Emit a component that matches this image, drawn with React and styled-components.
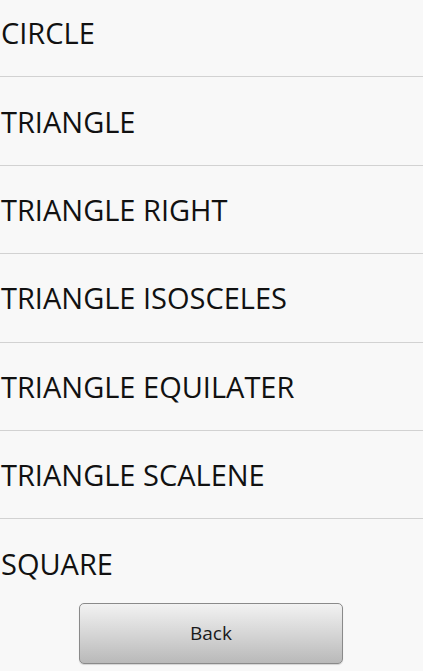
import React from "react";
import styled, { createGlobalStyle } from "styled-components";

const Global = createGlobalStyle`
  html, body { margin: 0; padding: 0; background: #f8f8f8; }
  body { width: 423px; height: 671px; overflow: hidden; font-family: "Open Sans", "Noto Sans", sans-serif; }
`;

const Screen = styled.div`
  width: 423px;
  height: 671px;
  overflow: hidden;
  display: flex;
  flex-direction: column;
  background: #f8f8f8;
`;

const List = styled.ul`
  list-style: none;
  margin: -11px 0 0 0;
  padding: 0;
`;

const Item = styled.li`
  height: 87.4px;
  display: flex;
  align-items: center;
  padding: 0 0 0 1px;
  font-size: 29px;
  color: #111;
  border-top: ${(p) => (p.$first ? "none" : "1px solid #d2d2d2")};
`;

const Footer = styled.div`
  display: flex;
  justify-content: center;
  margin-top: -4px;
`;

const Button = styled.button`
  width: 264px;
  height: 61px;
  margin-left: -1px;
  border: 1px solid #8a8a8a;
  border-radius: 5px;
  background: linear-gradient(#f2f2f2, #d6d6d6 50%, #b9b9b9);
  font-family: "Open Sans", "Noto Sans", sans-serif;
  font-size: 19px;
  color: #1a1a1a;
  box-shadow: 0 1px 1px rgba(0,0,0,0.15);
`;

const items = [
  "CIRCLE",
  "TRIANGLE",
  "TRIANGLE RIGHT",
  "TRIANGLE ISOSCELES",
  "TRIANGLE EQUILATER",
  "TRIANGLE SCALENE",
  "SQUARE",
];

export default function App() {
  return (
    <Screen>
      <Global />
      <List>
        {items.map((t, i) => (
          <Item key={t} $first={i === 0}>{t}</Item>
        ))}
      </List>
      <Footer>
        <Button>Back</Button>
      </Footer>
    </Screen>
  );
}
